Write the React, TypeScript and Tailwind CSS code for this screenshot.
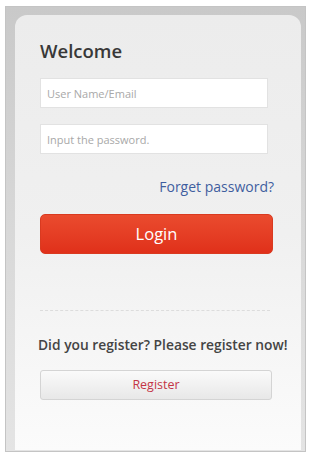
export default function App() {
  return (
    <div className="w-[312px] h-[456px] bg-white pt-[6px] pl-[5px] pr-[6px] pb-[4px] font-['Open_Sans',sans-serif]">
      <div className="h-full w-full bg-gradient-to-b from-[#c9c9c9] via-[#d8d8d8] to-[#e4e4e4] border border-[#c4c4c4] pt-[8px] pl-[9px] pr-[4px] pb-[1px]">
        <div className="h-full w-full rounded-t-[12px] bg-gradient-to-b from-[#ececec] via-[#f0f0f0] to-[#fbfbfb] pl-[25px] pr-[24px] pt-[25px] flex flex-col">
          <h1 className="text-[18.5px] leading-[22px] text-[#383838] font-semibold">Welcome</h1>
          <input
            className="mt-[16px] h-[30px] w-[228px] bg-white border border-[#e2e2e2] px-[6px] text-[11px] text-[#999] placeholder:text-[#a8a8a8] outline-none"
            placeholder="User Name/Email"
          />
          <input
            className="mt-[16px] h-[30px] w-[228px] bg-white border border-[#e2e2e2] px-[6px] text-[11px] text-[#999] placeholder:text-[#a8a8a8] outline-none"
            placeholder="Input the password."
          />
          <div className="mt-[24px] flex justify-end pr-[3px]">
            <a className="text-[14px] leading-[18px] text-[#3f5e9f]">Forget password?</a>
          </div>
          <button className="mt-[18px] h-[40px] w-[233px] rounded-[5px] bg-gradient-to-b from-[#ea4b2e] to-[#e0301a] text-white text-[16.5px] border border-[#d93a20]">
            Login
          </button>
          <div className="mt-[56px] w-[230px] border-t border-dashed border-[#dcdcdc]" />
          <p className="mt-[25px] -ml-[2px] text-[13.8px] leading-[18px] text-[#444] font-semibold whitespace-nowrap">
            Did you register? Please register now!
          </p>
          <button className="mt-[16px] h-[30px] w-[232px] rounded-[3px] bg-gradient-to-b from-[#fafafa] to-[#e8e8e8] border border-[#d4d4d4] text-[12.5px] text-[#c43546]">
            Register
          </button>
        </div>
      </div>
    </div>
  )
}
